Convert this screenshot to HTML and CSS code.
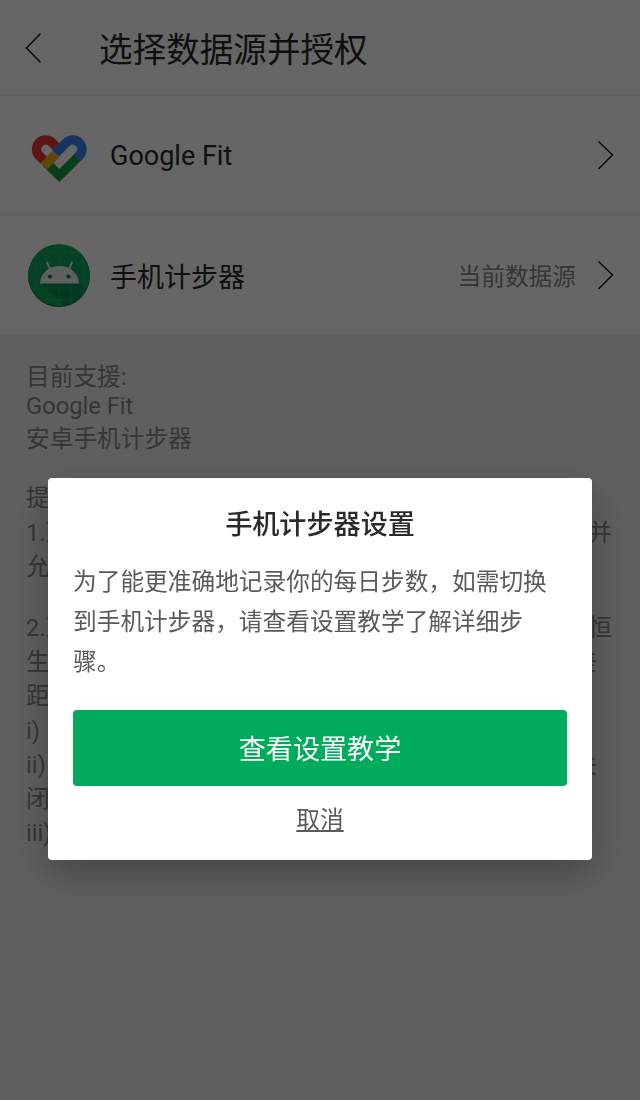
FILE: index.html
```html
<!DOCTYPE html>
<html lang="zh-CN">
<head>
  <meta charset="UTF-8" />
  <meta name="viewport" content="width=device-width, initial-scale=1.0" />
  <title>选择数据源并授权</title>
  <link rel="stylesheet" href="styles.css">
</head>
<body>
  <header class="header">
    <svg class="back" width="18" height="32" viewBox="0 0 18 32"><path d="M15.500 1.500 1.500 16 15.500 30.500" /></svg>
    <h1>选择数据源并授权</h1>
  </header>

  <div class="source">
    <svg class="icon" width="64" height="64" viewBox="0 0 64 64">
      <g fill="none" stroke-width="9.500">
        <path stroke="#ea3535" d="M16 37.500 11 32.500A9.200 9.200 0 0 1 24 19.500L30 25.500" />
        <path stroke="#1a9c42" d="M51.500 32.500 31.300 52.600 18 39.300" />
        <path stroke="#3b82ee" d="M27.500 30.500 38.500 19.500A9.200 9.200 0 0 1 51.500 32.500L49 35" />
      </g>
      <path fill="#f5b414" d="M12.500 40 24.500 28 31.200 34.200 19 46.400Z" />
    </svg>
    <span class="name">Google Fit</span>
    <svg class="arrow" width="18" height="32" viewBox="0 0 18 32"><path d="M1.500 2.500 15.500 16 1.500 30" /></svg>
  </div>

  <div class="source">
    <svg class="icon" width="64" height="64" viewBox="0 0 64 64">
      <clipPath id="disc"><circle cx="31" cy="32" r="31" /></clipPath>
      <circle cx="31" cy="33" r="31" fill="#08703c" />
      <g clip-path="url(#disc)">
        <circle cx="31" cy="32" r="31" fill="#0aa45c" />
        <path d="M13 39.500 38 64H44L60 48L51 39.500Z" fill="#087a46" opacity=".5" />
        <path stroke="#5cc796" stroke-width=".7" opacity=".4" d="M7 0V64M19 0V64M31 0V64M43 0V64M55 0V64M0 9H64M0 21H64M0 33H64M0 45H64M0 57H64" />
      </g>
      <path fill="#e9efea" d="M12 40.500A19.500 17.500 0 0 1 51 40.500Z" />
      <path fill="none" stroke="#e9efea" stroke-width="1.800" stroke-linecap="round" d="M22.500 27 19 19.500M40.500 27 44 19.500" />
      <circle cx="22" cy="33.500" r="2.100" fill="#0a8b50" />
      <circle cx="40.500" cy="33.500" r="2.100" fill="#0a8b50" />
    </svg>
    <span class="name">手机计步器</span>
    <span class="current">当前数据源</span>
    <svg class="arrow" width="18" height="32" viewBox="0 0 18 32"><path d="M1.500 2.500 15.500 16 1.500 30" /></svg>
  </div>

  <div class="notes">
    <p>目前支援:</p>
    <p class="latin">Google Fit</p>
    <p>安卓手机计步器</p>
    <p class="gap">提示:</p>
    <p class="split"><span>1.到</span><span>并</span></p>
    <p>允许</p>
    <p class="gap split"><span>2.到</span><span>恒</span></p>
    <p class="split short"><span>生</span><span>差</span></p>
    <p>距</p>
    <p>i)</p>
    <p class="split short"><span>ii)</span><span>关</span></p>
    <p>闭</p>
    <p>iii)</p>
  </div>

  <div class="overlay">
    <div class="dialog">
      <h2>手机计步器设置</h2>
      <p>为了能更准确地记录你的每日步数，如需切换到手机计步器，请查看设置教学了解详细步骤。</p>
      <button class="primary">查看设置教学</button>
      <button class="cancel">取消</button>
    </div>
  </div>
</body>
</html>
```

FILE: styles.css
```css
* {
  box-sizing: border-box;
}
body {
  margin: 0;
  height: 1100px;
  overflow: hidden;
  background: #ededed;
  font-family: Roboto, "Noto Sans CJK SC", sans-serif;
  color: #2a2a2a;
}
h1, h2, p {
  margin: 0;
  font-weight: 400;
}
.header {
  display: flex;
  align-items: center;
  height: 96px;
  padding: 2px 0 0 25px;
  background: white;
  border-bottom: 2px solid #f0f0f0;
}
.header h1 {
  margin-left: 56px;
  padding-top: 6px;
  font-size: 33.6px;
  line-height: 48px;
}
.back, .arrow {
  fill: none;
  stroke: #222;
  stroke-width: 1.6;
}
.source {
  display: flex;
  align-items: center;
  height: 118px;
  padding: 0 25px 0 28px;
  background: white;
}
.source + .source {
  height: 120px;
  padding-bottom: 1px;
  border-top: 2px solid #f5f5f5;
}
.name {
  margin-left: 18px;
  padding-top: 2px;
  flex: 1;
  font-size: 27px;
}
.current {
  margin-right: 21px;
  font-size: 23.7px;
  color: #888;
}
.notes {
  padding: 26px 28px 0 26px;
  font-size: 23.7px;
  line-height: 34.2px;
  color: #888;
}
.notes .latin {
  margin-top: -2px;
  margin-bottom: 2px;
  line-height: 28px;
}
.notes .gap {
  margin-top: 25px;
}
.notes .gap.split {
  margin-top: 27px;
}
.split {
  display: flex;
  justify-content: space-between;
}
.short {
  padding-right: 15px;
}
.overlay {
  position: fixed;
  top: 0;
  left: 0;
  width: 640px;
  height: 1100px;
  padding: 478px 48px 0;
  background: rgba(0,0,0,0.6);
}
.dialog {
  height: 382px;
  padding: 27px 25px 0;
  text-align: center;
  background: white;
  border-radius: 4px;
  box-shadow: 0 14px 36px rgba(0,0,0,0.28);
}
.dialog h2 {
  font-size: 27.1px;
  font-weight: 500;
  line-height: 40px;
}
.dialog p {
  margin: 17px 0 28px;
  font-size: 23.7px;
  line-height: 40px;
  color: #5a5a5a;
  text-align: left;
}
button {
  display: block;
  padding: 0;
  border: none;
  font-family: inherit;
  cursor: pointer;
}
.primary {
  width: 100%;
  height: 76px;
  padding-bottom: 2px;
  border-radius: 4px;
  background: #00ac5c;
  color: white;
  font-size: 27.1px;
}
.cancel {
  margin: 16px auto 0;
  background: none;
  color: #5a5a5a;
  font-size: 23.7px;
  line-height: 36px;
  text-decoration: underline;
}
```
